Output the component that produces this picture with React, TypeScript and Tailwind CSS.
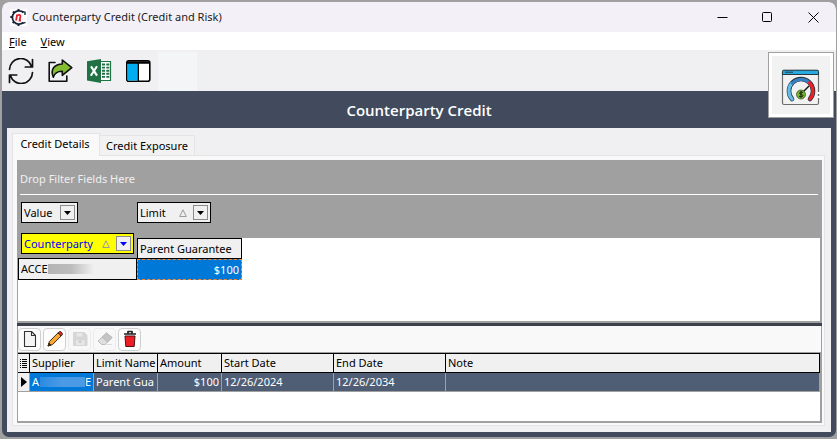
import type { ReactNode } from "react";

function AppLogo() {
  return (
    <svg width="17" height="17" viewBox="0 0 17 17" aria-hidden="true">
      <rect width="17" height="17" fill="#fff" />
      <path d="M13.4 3.6A6.6 6.6 0 1 0 13.4 13.4" fill="none" stroke="#17243c" strokeWidth="1.8" />
      <path d="M8.5 0v2M3 2.5l1.2 1.3M0.3 8h2M2.7 14l1.3-1.3M8.5 15v2" stroke="#17243c" strokeWidth="2" />
      <path d="M6 11.5 7.2 5.5M6.8 7.2C8 5.5 10.8 5.5 10.4 7.4L9.6 11.5H11" fill="none" stroke="#e5212d" strokeWidth="1.8" />
      <path d="M11.5 2.2 15 3.2V6M12 14.6l3.5-1.2" fill="none" stroke="#17243c" strokeWidth="1.4" />
    </svg>
  );
}

function RefreshIcon() {
  return (
    <svg width="26" height="26" viewBox="0 0 26 26" fill="none" stroke="#111" strokeWidth="1.7" strokeLinecap="round" strokeLinejoin="round">
      <path d="M1.5 11.5A11.3 11.3 0 0 1 23.6 8.5M24.5 1.5v7.5h-7.2" />
      <path d="M24.5 14.5A11.3 11.3 0 0 1 2.4 17.5M1.5 24.5V17h7.2" />
    </svg>
  );
}

function ExportIcon() {
  return (
    <svg width="26" height="26" viewBox="0 0 26 26" fill="none" stroke="#111" strokeWidth="1.6" strokeLinejoin="round" strokeLinecap="round">
      <path d="M8 4.5H2.2v18.8h17.6V18" />
      <path d="M6.3 19.3C2.8 11 8 6.2 15.3 6V2l9.5 7.7-9.5 7.6v-4.1c-4.2-.2-7.5 1.3-9 6.1Z" fill="#84bd32" />
    </svg>
  );
}

function ExcelIcon() {
  return (
    <svg width="26" height="26" viewBox="0 0 26 26">
      <path d="M14 3.5h10.5v19H14" fill="#fff" stroke="#207245" strokeWidth="1.2" />
      <path d="M16 6.5h3M16 9.6h3M16 12.7h3M16 15.8h3M16 18.9h3M20.3 6.5h3M20.3 9.6h3M20.3 12.7h3M20.3 15.8h3M20.3 18.9h3" stroke="#207245" strokeWidth="1.9" />
      <path d="M1 3.3 15 1v24L1 22.5Z" fill="#207245" />
      <path d="m5 8.4 6 9.2M11 8.2 4.8 17.8" stroke="#fff" strokeWidth="2.1" />
    </svg>
  );
}

function LayoutIcon() {
  return (
    <svg width="26" height="26" viewBox="0 0 26 26">
      <rect x="1.8" y="2.8" width="23" height="20.4" rx="2" fill="#fff" stroke="#000" strokeWidth="1.6" />
      <path d="M2.6 5h10.2v17.4H2.6Z" fill="#00adef" />
      <path d="M2 4.5h22.6" stroke="#000" strokeWidth="2.6" />
      <path d="M13.3 5v18" stroke="#000" strokeWidth="1.4" />
    </svg>
  );
}

function GaugeIcon() {
  return (
    <svg width="40" height="38" viewBox="0 0 40 38" fill="none">
      <rect x="1.5" y="1.5" width="36" height="34" rx="1.5" fill="#f2f2f2" stroke="#6b6e70" strokeWidth="1.2" />
      <path d="M1.5 5.5v-3q0-1.3 1.3-1.3h33.4q1.3 0 1.3 1.3v3Z" fill="#27a9e1" stroke="#25373f" />
      <path d="M4 3.2h8" stroke="#25373f" strokeWidth="1" />
      <path d="M11 30a12 12 0 1 1 18 0" stroke="#26343b" strokeWidth="4.6" strokeLinecap="round" />
      <path d="M11 30a12 12 0 0 1-.5-15.5" stroke="#62bde8" strokeWidth="3.2" strokeLinecap="round" />
      <path d="M10.5 15.2a12 12 0 0 1 18-1.3" stroke="#397fc3" strokeWidth="3.2" />
      <path d="M28.5 13.8A12 12 0 0 1 29 30" stroke="#ec2028" strokeWidth="3.2" strokeLinecap="round" />
      <path d="m22 23 6-6" stroke="#111" strokeWidth="1.4" />
      <circle cx="20" cy="25.5" r="4.5" fill="#77b72f" stroke="#27401b" strokeWidth=".7" />
      <path d="M22 23.6c-1.4-1.1-3.7-.6-3.4.7.3 1.2 3.1.9 3.3 2.2.2 1.4-2.4 1.7-3.9.6M20 22.4v6.2" stroke="#111" strokeWidth="1" />
      <path d="M36 24h3M36 28h3" stroke="#fff" strokeWidth="2" />
    </svg>
  );
}

function NewIcon() {
  return (
    <svg width="18" height="18" viewBox="0 0 18 18" fill="#f5f5f5" stroke="#333" strokeWidth="1.1" strokeLinejoin="round">
      <path d="M3.5 1.5h7l4 4v11h-11ZM10.5 1.5v4h4" />
    </svg>
  );
}

function PencilIcon() {
  return (
    <svg width="18" height="18" viewBox="0 0 18 18" stroke="#3b2a16" strokeWidth="1" strokeLinejoin="round">
      <path d="m2 16 1.4-4.5L12 2.9l3.1 3.1-8.6 8.6Z" fill="#f6a832" />
      <path d="m12 2.9 1-1c1.5-1.4 4.5 1.6 3.1 3.1l-1 1Z" fill="#e32635" />
      <path d="m2 16 1-3 2 2Z" fill="#222" />
    </svg>
  );
}

function SaveIcon() {
  return (
    <svg width="18" height="18" viewBox="0 0 18 18">
      <path d="M2.5 2.5h10.7L16 5.3v10.2H2.5Z" fill="#d6d6d6" stroke="#d6d6d6" strokeLinejoin="round" />
      <path d="M5.5 3h6v3.5h-6ZM5 10h8.5v5H5Z" fill="#e7e7e7" />
      <circle cx="9" cy="11.5" r="1.6" fill="#ccc" />
    </svg>
  );
}

function EraserIcon() {
  return (
    <svg width="18" height="18" viewBox="0 0 18 18" stroke="#bcbcbc" strokeWidth="1" strokeLinejoin="round">
      <path d="m2 11 8.5-8 5.5 4.5-6.8 7H5.5Z" fill="#dedede" />
      <path d="m10.5 3 5.5 4.5-4.5 4.6L6 7.2Z" fill="#c4c4c4" />
      <path d="M9 14.5h7" stroke="#ddd" />
    </svg>
  );
}

function TrashIcon() {
  return (
    <svg width="18" height="18" viewBox="0 0 18 18" strokeLinejoin="round">
      <path d="M4 6h10l-.8 10.5H4.8Z" fill="#ee1c24" stroke="#4d1215" />
      <path d="M3 4h12M7 3.5v-2h4v2" fill="none" stroke="#222" strokeWidth="1.7" />
    </svg>
  );
}

function ToolButton({ label, children }: { label: string; children: ReactNode }) {
  return (
    <button aria-label={label} className="flex h-[41px] w-[39px] items-center justify-center pt-px pr-px">
      {children}
    </button>
  );
}

function EditButton({ label, disabled, children }: { label: string; disabled?: boolean; children: ReactNode }) {
  return (
    <button
      aria-label={label}
      disabled={disabled}
      className="flex h-[23px] w-[23px] items-center justify-center rounded-[4px] border border-[#cfcfcf] bg-[#fdfdfd] disabled:border-[#ececec] disabled:bg-[#f8f8f8]"
    >
      {children}
    </button>
  );
}

function FieldBox({ name, sorted, active }: { name: string; sorted?: boolean; active?: boolean }) {
  return (
    <div
      className={
        active
          ? "flex h-[21px] w-[113px] items-center border border-black bg-[#ffff00] px-[2px] text-[#0000ff]"
          : sorted
            ? "flex h-[21px] w-[74px] items-center border border-black bg-[#f0f0f0] px-[2px]"
            : "flex h-[21px] w-[57px] items-center border border-black bg-[#f0f0f0] px-[2px]"
      }
    >
      <span className="flex-1">{name}</span>
      {sorted && (
        <svg width="8" height="8" viewBox="0 0 8 8" className="mr-[6px]" fill="none" stroke="#9a9a9a">
          <path d="M4 .8 7.3 7.5H.7Z" />
        </svg>
      )}
      <button aria-label={`Filter ${name}`} className="flex h-[15px] w-[15px] items-center justify-center border border-[#8c8c8c] bg-[#f0f0f0]">
        <svg width="7" height="4" viewBox="0 0 7 4" fill={active ? "#0000ff" : "#000"}>
          <path d="M0 0h7L3.5 4Z" />
        </svg>
      </button>
    </div>
  );
}

function Pivot() {
  return (
    <section className="border-r-2 border-b-2 border-l border-[#a0a0a0] bg-white">
      <div className="h-[68px] bg-[#a0a0a0] px-[2px]">
        <p className="flex h-[35px] items-center border-b border-white pt-[4px] text-[#f0f0f0]">Drop Filter Fields Here</p>
        <div className="flex gap-[59px] pt-[7px] pl-px">
          <FieldBox name="Value" />
          <FieldBox name="Limit" sorted />
        </div>
      </div>
      <table className="w-full table-fixed border-collapse">
        <colgroup>
          <col className="w-[119px]" />
          <col className="w-[105px]" />
          <col />
        </colgroup>
        <thead>
          <tr className="h-[30px]">
            <th className="bg-[#a0a0a0] p-0 pl-[3px] text-left align-top font-normal">
              <div className="pt-[5px]">
                <FieldBox name="Counterparty" active sorted />
              </div>
            </th>
            <th className="p-0 text-left align-top font-normal">
              <div className="h-[10px] bg-[#a0a0a0]" />
              <div className="flex h-[20px] items-center border-x border-t border-black bg-[#f0f0f0] pl-[2px] whitespace-nowrap">Parent Guarantee</div>
            </th>
            <th className="p-0 align-top">
              <div className="h-[10px] bg-[#a0a0a0]" />
            </th>
          </tr>
        </thead>
        <tbody>
          <tr>
            <th className="p-0 text-left font-normal">
              <div className="flex h-[22px] items-center border border-black bg-[#f0f0f0] pl-[2px]">
                <span className="w-[27px]">ACCE</span>
                <span className="h-[10px] w-[46px] bg-linear-to-r from-[#b4b4b4] via-[#bcbcbc] to-[#f0f0f0]" />
              </div>
            </th>
            <td className="p-0">
              <div className="border-t border-black">
                <div className="flex h-[21px] items-center justify-end border border-dashed border-[#ff8728] bg-[#0078d7] pr-[2px] text-white">$100</div>
              </div>
            </td>
            <td />
          </tr>
        </tbody>
      </table>
      <div className="h-[41px]" />
    </section>
  );
}

function DetailGrid() {
  return (
    <div className="border-t border-r-2 border-b-2 border-l border-[#a0a0a0] bg-white pb-[29px]">
      <table className="w-full table-fixed border-separate border-spacing-0 whitespace-nowrap">
        <colgroup>
          <col className="w-[12px]" />
          <col className="w-[64px]" />
          <col className="w-[64px]" />
          <col className="w-[64px]" />
          <col className="w-[112px]" />
          <col className="w-[112px]" />
          <col />
        </colgroup>
        <thead>
          <tr className="h-[20px] bg-[#f0f0f0] text-left *:overflow-hidden *:border-y *:border-r *:border-black *:p-0 *:pl-[2px] *:font-normal">
            <th aria-label="Row marker">
              <svg width="8" height="10" viewBox="0 0 8 10" stroke="#000" strokeDasharray="1 1 9">
                <path d="M0 1.5h7M0 3.5h7M0 5.5h7M0 7.5h7M0 9.5h7" />
              </svg>
            </th>
            <th>Supplier</th>
            <th>Limit Name</th>
            <th>Amount</th>
            <th>Start Date</th>
            <th>End Date</th>
            <th>Note</th>
          </tr>
        </thead>
        <tbody>
          <tr className="h-[19px] bg-[#4f5d75] text-white *:overflow-hidden *:border-r *:border-b *:border-[#a0a0a0] *:p-0 *:pl-[2px]">
            <td className="bg-[#f0f0f0]">
              <svg width="6" height="10" viewBox="0 0 6 10" className="ml-px">
                <path d="M0 0v10l6-5Z" />
              </svg>
            </td>
            <td className="bg-[#0078d7]">
              <span className="flex items-center">
                <span className="w-[8px]">A</span>
                <span className="h-[10px] w-[45px] bg-linear-to-r from-[#2b8be0] via-[#4a9ae6] to-[#4a9ae6]" />
                <span>E</span>
              </span>
            </td>
            <td>Parent Gua</td>
            <td className="text-right">
              <span className="pr-[2px]">$100</span>
            </td>
            <td>12/26/2024</td>
            <td>12/26/2034</td>
            <td />
          </tr>
        </tbody>
      </table>
    </div>
  );
}

export default function App() {
  return (
    <div className="relative flex min-h-screen flex-col border-t-2 border-r border-b-2 border-l-2 border-[#a0a0a0] bg-[#a0a0a0] font-['Noto_Sans','Open_Sans',sans-serif] text-[11px] leading-[14px] text-black">
      <div className="flex flex-1 flex-col overflow-hidden rounded-[7px] bg-[#414b5d]">
        <header className="flex h-[30px] items-center bg-[#f3f0f8] pl-[8px]">
          <AppLogo />
          <h1 className="flex-1 pl-[5px] text-[#1b1b1b]">Counterparty Credit (Credit and Risk)</h1>
          <button aria-label="Minimize" className="flex h-full w-[46px] items-center justify-center">
            <svg width="11" height="11" viewBox="0 0 11 11" stroke="#000">
              <path d="M.5 5.5h10" />
            </svg>
          </button>
          <button aria-label="Maximize" className="flex h-full w-[45px] items-center justify-center">
            <svg width="11" height="11" viewBox="0 0 11 11" fill="none" stroke="#000">
              <rect x=".5" y=".5" width="9" height="9" rx="1" />
            </svg>
          </button>
          <button aria-label="Close" className="flex h-full w-[46px] items-center justify-center">
            <svg width="11" height="11" viewBox="0 0 11 11" stroke="#000">
              <path d="m.5.5 10 10M10.5.5l-10 10" />
            </svg>
          </button>
        </header>
        <nav className="flex h-[18px] items-center gap-[14px] bg-white pt-[2px] pl-[7px]">
          <button>
            <u>F</u>ile
          </button>
          <button>
            <u>V</u>iew
          </button>
        </nav>
        <div className="flex h-[41px] bg-[#f0f0f2]">
          <ToolButton label="Refresh"><RefreshIcon /></ToolButton>
          <ToolButton label="Export"><ExportIcon /></ToolButton>
          <ToolButton label="Export to Excel"><ExcelIcon /></ToolButton>
          <ToolButton label="Layout"><LayoutIcon /></ToolButton>
          <div className="mt-[2px] w-[39px] bg-[#f4f5f7]" />
        </div>
        <h2 className="flex h-[37px] items-center justify-center font-['Open_Sans','Noto_Sans',sans-serif] text-[15px] leading-[20px] font-semibold text-white">
          Counterparty Credit
        </h2>
        <main className="mx-[5px] mb-[5px] flex flex-1 flex-col bg-[#f0f0f2] px-[5px] pt-[5px] pb-[6px]">
          <div role="tablist" className="flex h-[22px] items-end">
            <button role="tab" aria-selected="true" className="z-10 -mb-px h-[23px] w-[88px] border-x border-t border-[#e4e4e4] bg-[#f9f9f9] pr-[2px] pb-[2px]">
              Credit Details
            </button>
            <button role="tab" aria-selected="false" className="h-[20px] w-[95px] border-t border-r border-[#e4e4e4] bg-[#f2f2f2]">
              Credit Exposure
            </button>
          </div>
          <div className="mr-[1px] flex-1 border border-[#e4e4e4] bg-[#f9f9f9] pr-[2px] pb-[2px] pl-[4px]">
            <div className="pt-[4px]">
              <Pivot />
            </div>
            <div className="h-[3px] bg-[#3c414b]" />
            <div className="flex h-[26px] items-center gap-[2px] border-r border-l border-[#a0a0a0]">
              <EditButton label="New"><NewIcon /></EditButton>
              <EditButton label="Edit"><PencilIcon /></EditButton>
              <EditButton label="Save" disabled><SaveIcon /></EditButton>
              <EditButton label="Cancel" disabled><EraserIcon /></EditButton>
              <EditButton label="Delete"><TrashIcon /></EditButton>
            </div>
            <DetailGrid />
          </div>
        </main>
      </div>
      <button aria-label="Credit dashboard" className="absolute top-[50px] right-[2px] flex h-[66px] w-[66px] items-center justify-center border border-[#a0a0a0] bg-white">
        <span className="flex h-[58px] w-[58px] items-center justify-center bg-[#f2f2f2] pt-[6px]">
          <GaugeIcon />
        </span>
      </button>
    </div>
  );
}
